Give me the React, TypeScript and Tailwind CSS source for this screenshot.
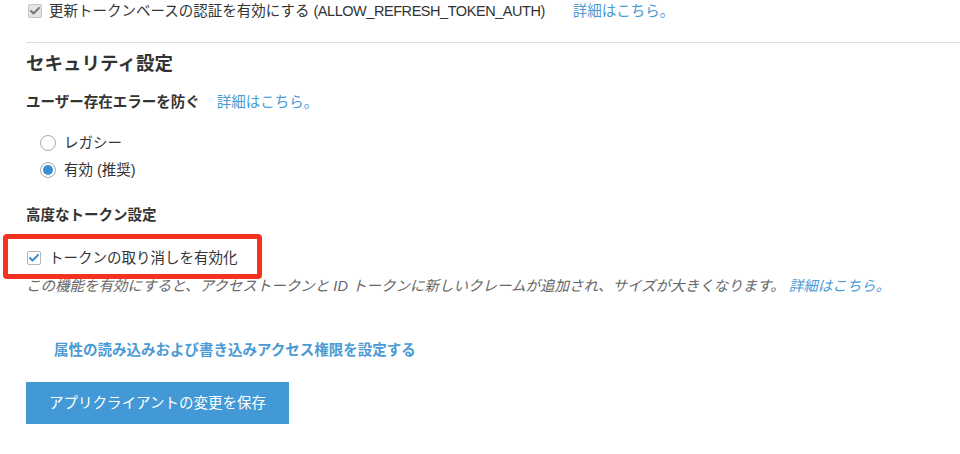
import { Check } from "lucide-react";

const font = { fontFamily: '"Liberation Sans", "Noto Sans CJK JP", sans-serif' };

function Checkbox({ tone }: { tone: "gray" | "blue" }) {
  const box =
    tone === "gray"
      ? "bg-[#e4e4e4] border-[#c4c4c4] text-[#777]"
      : "bg-white border-[#b5b5b5] text-[#3a8fd3]";
  return (
    <span className={`flex h-[14px] w-[14px] shrink-0 items-center justify-center rounded-[2px] border ${box}`}>
      <Check size={12} strokeWidth={4} />
    </span>
  );
}

function Radio({ checked, label }: { checked?: boolean; label: string }) {
  return (
    <label className="flex h-[22px] items-center gap-[8px]">
      <span className="flex h-[16px] w-[16px] items-center justify-center rounded-full border border-[#a9a9a9] bg-white">
        {checked && <span className="h-[10px] w-[10px] rounded-full bg-[#3a8fd3]" />}
      </span>
      <span>{label}</span>
    </label>
  );
}

export default function App() {
  return (
    <div
      style={font}
      className="h-[454px] w-[960px] overflow-hidden bg-white pl-[26px] text-[14.5px] leading-[20px] text-[#333]"
    >
      <div className="flex h-[22px] items-center">
        <span className="ml-[2px] mr-[7px]">
          <Checkbox tone="gray" />
        </span>
        <span>
          更新トークンベースの認証を有効にする{" "}
          <span className="tracking-[-0.45px]">(ALLOW_REFRESH_TOKEN_AUTH)</span>
        </span>
        <a className="ml-[28px] text-[#4a9ad4]">詳細はこちら。</a>
      </div>

      <div className="mt-[20px] border-t border-[#dcdcdc]" />

      <h2 className="mt-[9px] text-[18.5px] font-bold leading-[24px]">セキュリティ設定</h2>

      <div className="mt-[16px] flex items-center">
        <span className="font-bold">ユーザー存在エラーを防ぐ</span>
        <a className="ml-[17px] text-[#4a9ad4]">詳細はこちら。</a>
      </div>

      <div className="mt-[20px] flex flex-col gap-[5px] pl-[14px]">
        <Radio label="レガシー" />
        <Radio checked label="有効 (推奨)" />
      </div>

      <div className="mt-[24px] font-bold">高度なトークン設定</div>

      <div className="relative mt-[22px] flex h-[22px] items-center">
        <span className="ml-[1px] mr-[8px]">
          <Checkbox tone="blue" />
        </span>
        <span>トークンの取り消しを有効化</span>
        <div className="pointer-events-none absolute left-[-23px] top-[-13px] h-[45px] w-[259px] rounded-[4px] border-[5px] border-[#f5311f]" />
      </div>

      <p className="mt-[7px] italic text-[#666]">
        この機能を有効にすると、アクセストークンと ID トークンに新しいクレームが追加され、サイズが大きくなります。
        <a className="ml-[4px] text-[#4a9ad4]">詳細はこちら。</a>
      </p>

      <a className="ml-[28px] mt-[44px] block font-bold text-[#4a9ad4]">
        属性の読み込みおよび書き込みアクセス権限を設定する
      </a>

      <button className="mt-[22px] flex h-[42px] w-[263px] items-center justify-center bg-[#4299d6] text-[14.5px] text-white">
        アプリクライアントの変更を保存
      </button>
    </div>
  );
}
